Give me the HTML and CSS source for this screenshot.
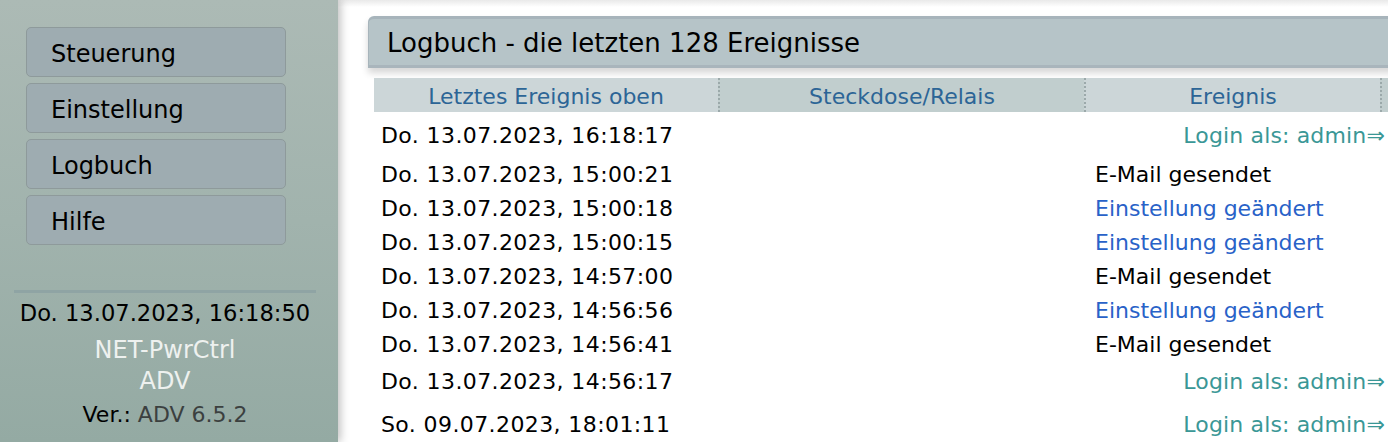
FILE: index.html
```html
<!DOCTYPE html>
<html lang="de">
<head>
<meta charset="utf-8">
<title>Logbuch</title>
<link rel="stylesheet" href="styles.css">
</head>
<body>
<div class="page">
  <aside class="sidebar">
    <nav class="menu">
      <a class="menu-item">Steuerung</a>
      <a class="menu-item">Einstellung</a>
      <a class="menu-item">Logbuch</a>
      <a class="menu-item">Hilfe</a>
    </nav>
    <div class="status">
      <div class="clock">Do. 13.07.2023, 16:18:50</div>
      <div class="product first">NET-PwrCtrl</div>
      <div class="product">ADV</div>
      <div class="version">Ver.: <span class="version-num">ADV 6.5.2</span></div>
    </div>
  </aside>
  <main class="content">
    <section class="panel">
      <h1 class="panel-title">Logbuch - die letzten 128 Ereignisse</h1>
      <table class="log">
        <colgroup>
          <col class="c-time">
          <col class="c-relay">
          <col class="c-event">
          <col class="c-extra">
        </colgroup>
        <thead>
          <tr>
            <th class="light">Letztes Ereignis oben</th>
            <th class="dark">Steckdose/Relais</th>
            <th class="light">Ereignis</th>
            <th class="dark"></th>
          </tr>
        </thead>
        <tbody>
          <tr class="login"><td class="time">Do. 13.07.2023, 16:18:17</td><td></td><td class="ev-login"><span>Login als: admin⇒</span></td><td></td></tr>
          <tr><td class="time">Do. 13.07.2023, 15:00:21</td><td></td><td class="ev ev-mail">E-Mail gesendet</td><td></td></tr>
          <tr><td class="time">Do. 13.07.2023, 15:00:18</td><td></td><td class="ev ev-setting">Einstellung geändert</td><td></td></tr>
          <tr><td class="time">Do. 13.07.2023, 15:00:15</td><td></td><td class="ev ev-setting">Einstellung geändert</td><td></td></tr>
          <tr><td class="time">Do. 13.07.2023, 14:57:00</td><td></td><td class="ev ev-mail">E-Mail gesendet</td><td></td></tr>
          <tr><td class="time">Do. 13.07.2023, 14:56:56</td><td></td><td class="ev ev-setting">Einstellung geändert</td><td></td></tr>
          <tr><td class="time">Do. 13.07.2023, 14:56:41</td><td></td><td class="ev ev-mail">E-Mail gesendet</td><td></td></tr>
          <tr class="login"><td class="time">Do. 13.07.2023, 14:56:17</td><td></td><td class="ev-login"><span>Login als: admin⇒</span></td><td></td></tr>
          <tr class="login"><td class="time">So. 09.07.2023, 18:01:11</td><td></td><td class="ev-login"><span>Login als: admin⇒</span></td><td></td></tr>
        </tbody>
      </table>
    </section>
  </main>
</div>
</body>
</html>
```

FILE: styles.css
```css
html, body {
  margin: 0;
  padding: 0;
  height: 100%;
  background: #ffffff;
}

body {
  font-family: "DejaVu Sans", Verdana, sans-serif;
  color: #000;
  overflow: hidden;
}

.page {
  display: flex;
  height: 100vh;
  overflow: hidden;
}

/* ---------- sidebar ---------- */
.sidebar {
  flex: 0 0 338px;
  width: 338px;
  height: 100%;
  background: linear-gradient(180deg, #acbab5 0%, #a1b3ad 50%, #94aaa3 100%);
  box-shadow: 2px 0 9px rgba(0, 0, 0, 0.28);
  position: relative;
  z-index: 2;
}

.menu {
  display: flex;
  flex-direction: column;
  gap: 6px;
  padding: 27px 0 0 26px;
}

.menu-item {
  display: block;
  box-sizing: border-box;
  width: 260px;
  height: 50px;
  line-height: 53px;
  padding-left: 24px;
  background: #9eacb1;
  border: 1.5px solid #8e9a9b;
  border-radius: 5px;
  font-size: 24px;
  color: #000;
  text-decoration: none;
  overflow: hidden;
}

.status {
  margin: 45px 22px 0 14px;
  border-top: 3.5px solid #8fa4a4;
  text-align: center;
}

.clock {
  margin-top: 7px;
  font-size: 22.6px;
  line-height: 26px;
}

.product {
  font-size: 24px;
  line-height: 31px;
  color: #eef1ef;
}

.product.first {
  margin-top: 9px;
}

.version {
  margin-top: 5px;
  font-size: 22px;
  line-height: 26px;
}

.version-num {
  color: #3b403f;
}

/* ---------- main ---------- */
.content {
  flex: 1 1 auto;
  min-width: 0;
  overflow: hidden;
  background: linear-gradient(180deg, #e9e9e9 0px, #ffffff 7px);
  padding: 16px 0 0 30px;
}

.panel {
  width: 1120px;
}

.panel-title {
  margin: 0;
  height: 52px;
  box-sizing: border-box;
  padding-left: 18px;
  line-height: 48px;
  font-size: 26px;
  font-weight: normal;
  color: #000;
  background: #b6c4c8;
  border-top: 3px solid #a7b4bb;
  border-bottom: 3px solid #a9b5bc;
  border-left: 1px solid #a7b4bb;
  border-radius: 6px 0 0 0;
  box-shadow: 0 5px 7px rgba(0, 0, 0, 0.16);
}

.log {
  margin: 10px 0 0 6px;
  border-collapse: separate;
  border-spacing: 0;
  table-layout: fixed;
  width: 1106px;
  font-size: 22px;
}

.c-time { width: 344px; }
.c-relay { width: 366px; }
.c-event { width: 296px; }
.c-extra { width: 100px; }

.log th {
  box-sizing: border-box;
  height: 34px;
  padding: 4px 0 0 0;
  font-weight: normal;
  color: #2c6596;
  text-align: center;
  vertical-align: top;
  line-height: 30px;
}

.log th + th {
  border-left: 2px dotted #9ba9aa;
}

.log th.light { background: #ccd6d8; }
.log th.dark { background: #c1cece; }

.log td {
  box-sizing: border-box;
  height: 34px;
  padding: 0 0 0 7px;
  line-height: 34px;
  white-space: nowrap;
  vertical-align: top;
  overflow: visible;
}

.log td.time {
  letter-spacing: 0.4px;
}

.log td.ev {
  padding-left: 11px;
}

.ev-mail { color: #000; }
.ev-setting { color: #2962c8; }

.log tr.login td {
  height: 43px;
  padding-top: 3px;
}

.log tbody tr:first-child td {
  height: 46px;
  padding-top: 7px;
}

.log td.ev-login {
  text-align: right;
  padding-right: 0;
  color: #3a9796;
}

.ev-login span {
  display: inline-block;
  margin-right: -5px;
  letter-spacing: 0.15px;
}
```
